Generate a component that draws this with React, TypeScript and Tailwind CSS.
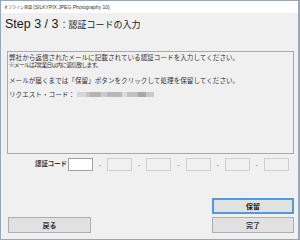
import React from "react";

const jp = "font-['Noto_Sans_CJK_JP','Noto_Sans',sans-serif]";

function Blur() {
  return (
    <span className="inline-flex items-center h-[6px] ml-[2px] blur-[0.7px]">
      <span className="w-[9px] h-[5px] bg-[#d6d6d6]" />
      <span className="w-[4px] h-[5px] bg-[#c4c4c4]" />
      <span className="w-[11px] h-[5px] bg-[#b4b4b4]" />
      <span className="w-[6px] h-[5px] bg-[#cdcdcd]" />
      <span className="w-[15px] h-[5px] bg-[#b8b8b8]" />
      <span className="w-[5px] h-[5px] bg-[#dadada]" />
      <span className="w-[11px] h-[5px] bg-[#c0c0c0]" />
      <span className="w-[8px] h-[5px] bg-[#a8a8a8]" />
      <span className="w-[8px] h-[5px] bg-[#c8c8c8]" />
    </span>
  );
}

export default function App() {
  const boxes = [0, 1, 2, 3, 4];
  return (
    <div className={`w-[300px] h-[240px] flex flex-col border-l border-t border-b border-r-2 border-[#97a7bb] bg-[#f0f0f0] ${jp}`}>
      <div className="h-[12px] bg-white flex items-center pl-[3px] text-[#333] leading-none">
        <span className="text-[4px]">オフライン登録</span>
        <span className="text-[5px] font-['Liberation_Sans',sans-serif] ml-[1px]">(SILKYPIX JPEG Photography 10)</span>
      </div>
      <div className="flex-1 flex flex-col">
        <div className="h-[22px] flex items-center pl-[4px] text-[#1a1a1a] leading-none">
          <span className="text-[12.5px] font-['Liberation_Sans',sans-serif]">Step 3 / 3</span>
          <span className="text-[9px] ml-[1px]">：認証コードの入力</span>
        </div>
        <div className="mt-[16px] ml-[6px] w-[287px] h-[103px] border border-[#a9a9a9] pl-[1px] pt-[1px] text-[6.6px] leading-[8px] text-[#333]">
          <div>弊社から返信されたメールに記載されている認証コードを入力してください。</div>
          <div className="text-[5.6px] tracking-[-0.6px]">※メールは2営業日以内に返信致します。</div>
          <div className="h-[7px]" />
          <div>メールが届くまでは「保留」ボタンをクリックして処理を保留してください。</div>
          <div className="h-[6px]" />
          <div className="flex items-center">
            <span>リクエスト・コード：</span>
            <Blur />
          </div>
        </div>
        <div className="mt-[4px] flex items-center h-[13px]">
          <span className="ml-[34px] text-[6.4px] text-[#333] leading-none font-bold">認証コード</span>
          <div className="ml-[1px] w-[25px] h-[13px] bg-white border border-[#a0a0a0]" />
          {boxes.map((b) => (
            <React.Fragment key={b}>
              <span className="w-[14.2px] text-center text-[7px] text-[#666] leading-none">-</span>
              <div className="w-[25px] h-[13px] border border-[#cfcfcf]" />
            </React.Fragment>
          ))}
        </div>
        <div className="mt-auto mb-[6px] flex items-end justify-between pl-[7px] pr-[4px]">
          <button className="w-[83px] h-[16px] bg-[#e1e1e1] border border-[#adadad] text-[7px] font-bold text-[#333] leading-none">戻る</button>
          <div className="flex flex-col gap-[3px]">
            <button className="w-[82px] h-[16px] bg-[#e1e1e1] border-2 border-[#4f9ae0] text-[7px] font-bold text-[#222] leading-none">保留</button>
            <button className="w-[82px] h-[16px] bg-[#e1e1e1] border border-[#adadad] text-[7px] font-bold text-[#333] leading-none">完了</button>
          </div>
        </div>
      </div>
    </div>
  );
}
